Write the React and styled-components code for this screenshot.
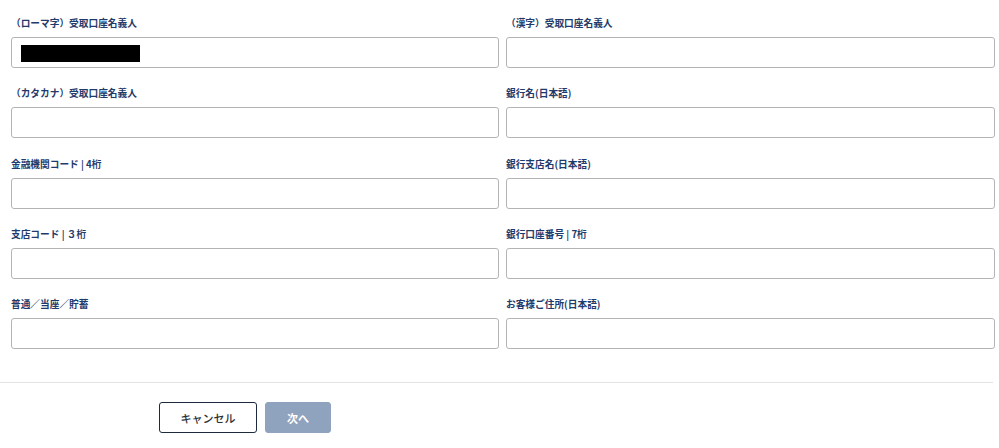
import React from "react";
import styled, { createGlobalStyle } from "styled-components";

const Global = createGlobalStyle`
  html, body { margin: 0; padding: 0; background: #fff; }
  body { font-family: "Noto Sans CJK JP", "Noto Sans", "Liberation Sans", sans-serif; }
  * { box-sizing: border-box; }
`;

const Page = styled.div`
  width: 999px;
  height: 448px;
  overflow: hidden;
  background: #fff;
`;

const Form = styled.div`
  display: grid;
  grid-template-columns: 488px 489px;
  column-gap: 7px;
  padding: 16px 4px 0 11px;
`;

const Field = styled.div`
  display: flex;
  flex-direction: column;
  height: 70.3px;
`;

const Label = styled.label`
  font-size: 9.7px;
  font-weight: 700;
  line-height: 14px;
  color: #1f3b6b;
  margin-bottom: 7px;
  white-space: nowrap;
`;

const InputWrap = styled.div`
  position: relative;
  height: 31px;
`;

const Input = styled.input`
  width: 100%;
  height: 31px;
  border: 1px solid #b4b4b4;
  border-radius: 3px;
  background: #fff;
  padding: 0 9px;
  font-size: 13px;
  outline: none;
`;

const Redaction = styled.span`
  position: absolute;
  left: 10px;
  top: 8px;
  width: 119px;
  height: 17px;
  background: #000;
`;

const Divider = styled.hr`
  margin: 15px 6px 0 0;
  border: 0;
  border-top: 1px solid #e2e2e2;
`;

const Actions = styled.div`
  display: flex;
  gap: 8px;
  padding: 19px 0 0 159px;
`;

const Button = styled.button`
  height: 31px;
  border-radius: 3px;
  font-family: inherit;
  font-size: 11px;
  cursor: pointer;
  padding: 0;
  width: ${(p) => (p.$primary ? "66px" : "98px")};
  border: 1px solid ${(p) => (p.$primary ? "#8fa2be" : "#1e2b3c")};
  background: ${(p) => (p.$primary ? "#8fa2be" : "#fff")};
  color: ${(p) => (p.$primary ? "#fff" : "#2b2f36")};
  font-weight: ${(p) => (p.$primary ? 700 : 500)};
`;

const fields = [
  ["（ローマ字）受取口座名義人", true],
  ["（漢字）受取口座名義人"],
  ["（カタカナ）受取口座名義人"],
  ["銀行名(日本語)"],
  ["金融機関コード | 4桁"],
  ["銀行支店名(日本語)"],
  ["支店コード | ３桁"],
  ["銀行口座番号 | 7桁"],
  ["普通／当座／貯蓄"],
  ["お客様ご住所(日本語)"],
];

export default function App() {
  return (
    <Page>
      <Global />
      <Form>
        {fields.map(([label, redacted]) => (
          <Field key={label}>
            <Label>{label}</Label>
            <InputWrap>
              <Input type="text" />
              {redacted && <Redaction />}
            </InputWrap>
          </Field>
        ))}
      </Form>
      <Divider />
      <Actions>
        <Button>キャンセル</Button>
        <Button $primary>次へ</Button>
      </Actions>
    </Page>
  );
}
